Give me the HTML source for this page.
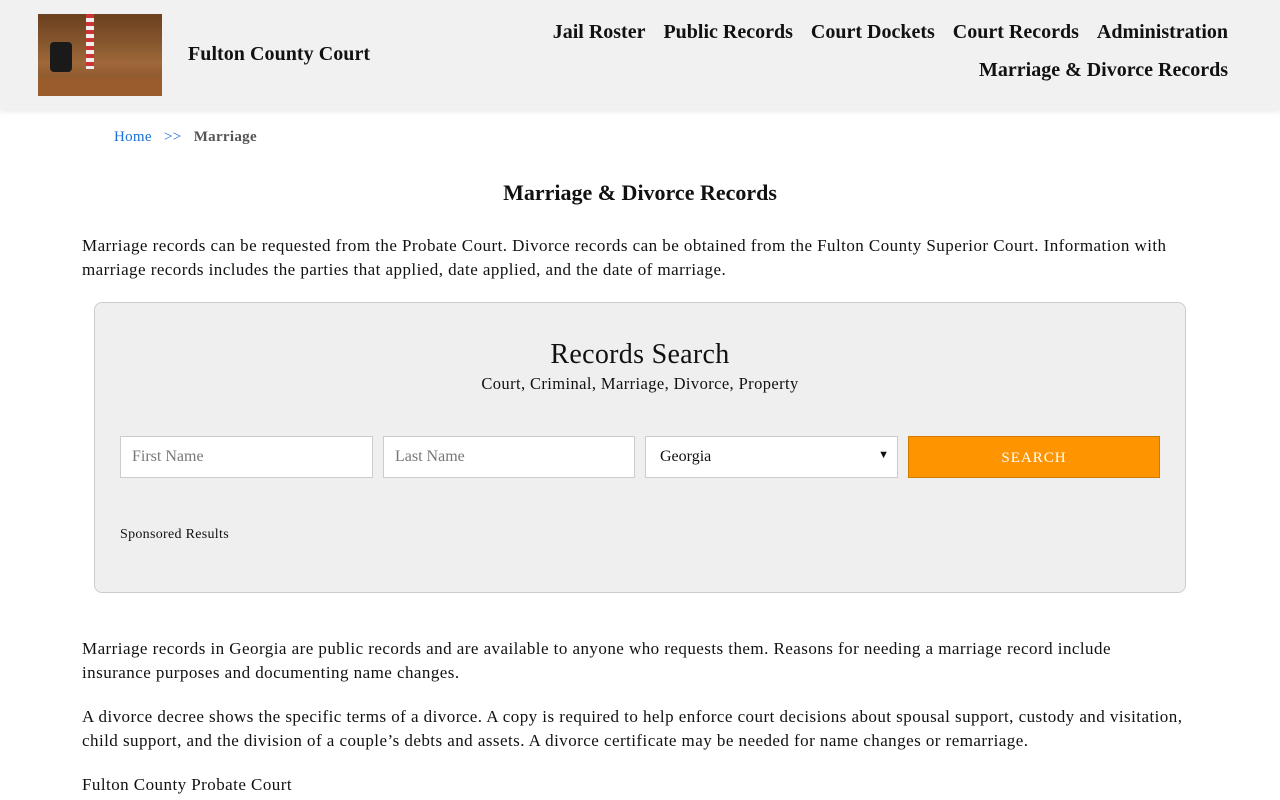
<!DOCTYPE html>
<html><head><meta charset="utf-8"><style>
body{margin:0;background:#fff;font-family:"Liberation Serif",serif;color:#111;width:1280px;height:800px;overflow:hidden;position:relative}
.hdr{position:absolute;left:0;top:0;width:1280px;height:110px;background:#f1f1f1;box-shadow:0 2px 4px rgba(0,0,0,.08)}
.logo{position:absolute;left:38px;top:14px;width:124px;height:82px;background:linear-gradient(180deg,#6b3f1f 0%,#8a5a30 40%,#a0683a 60%,#7a4a22 100%)}
.title{position:absolute;left:188px;top:43px;font-size:20px;font-weight:bold;letter-spacing:0.05px}
.nav{position:absolute;right:52px;font-size:20px;font-weight:bold;letter-spacing:0px}
.nav span{margin-left:18px}
.bc{position:absolute;left:114px;top:129px;font-size:15px;letter-spacing:0.3px}
.h1{position:absolute;left:0;width:1280px;text-align:center;top:180px;font-size:22px;font-weight:bold}
p{position:absolute;left:82px;width:1115px;margin:0;font-size:17px;line-height:24px;letter-spacing:0.45px}
.box{position:absolute;left:94px;top:302px;width:1090px;height:289px;background:#efefef;border:1px solid #ccc;border-radius:8px}
.inp{position:absolute;top:436px;height:42px;background:#fff;border:1px solid #ccc;box-sizing:border-box;font-size:16px;color:#777;padding:11px 11px}
</style></head><body>
<div class="hdr">
<div class="logo"><div style="position:absolute;left:12px;top:28px;width:22px;height:30px;background:#1a1a1a;border-radius:4px"></div><div style="position:absolute;left:48px;top:0;width:8px;height:55px;background:repeating-linear-gradient(180deg,#c33 0 4px,#eee 4px 8px)"></div><div style="position:absolute;left:0;top:64px;width:124px;height:18px;background:#9a5c2c"></div></div>
<div class="title">Fulton County Court</div>
<div class="nav" style="top:21px"><span>Jail Roster</span><span>Public Records</span><span>Court Dockets</span><span>Court Records</span><span>Administration</span></div>
<div class="nav" style="top:59px"><span>Marriage &amp; Divorce Records</span></div>
</div>
<div class="bc"><span style="color:#1a6fd6">Home</span>&nbsp;&nbsp; <span style="color:#1a6fd6">&gt;&gt;</span>&nbsp;&nbsp; <b style="color:#555">Marriage</b></div>
<div class="h1">Marriage &amp; Divorce Records</div>
<p style="top:234px">Marriage records can be requested from the Probate Court. Divorce records can be obtained from the Fulton County Superior Court. Information with marriage records includes the parties that applied, date applied, and the date of marriage.</p>
<div class="box"></div>
<div style="position:absolute;left:0;width:1280px;text-align:center;top:339px;font-size:28px;letter-spacing:0.3px">Records Search</div>
<div style="position:absolute;left:0;width:1280px;text-align:center;top:374px;font-size:16.5px;letter-spacing:0.4px">Court, Criminal, Marriage, Divorce, Property</div>
<div class="inp" style="left:120px;width:253px">First Name</div>
<div class="inp" style="left:383px;width:252px">Last Name</div>
<div class="inp" style="left:645px;width:253px;color:#111;padding-left:14px">Georgia<span style="position:absolute;right:8px;top:12px;font-size:11px">&#9660;</span></div>
<div style="position:absolute;left:908px;top:436px;width:252px;height:42px;background:#fd9400;border:1px solid #d07a00;box-sizing:border-box;color:#fff;text-align:center;line-height:42px;font-size:15px;letter-spacing:1px">SEARCH</div>
<div style="position:absolute;left:120px;top:527px;font-size:14px;letter-spacing:0.3px">Sponsored Results</div>
<p style="top:637px">Marriage records in Georgia are public records and are available to anyone who requests them. Reasons for needing a marriage record include<br>insurance purposes and documenting name changes.</p>
<p style="top:705px">A divorce decree shows the specific terms of a divorce. A copy is required to help enforce court decisions about spousal support, custody and visitation, child support, and the division of a couple’s debts and assets. A divorce certificate may be needed for name changes or remarriage.</p>
<p style="top:773px">Fulton County Probate Court</p>
</body></html>
